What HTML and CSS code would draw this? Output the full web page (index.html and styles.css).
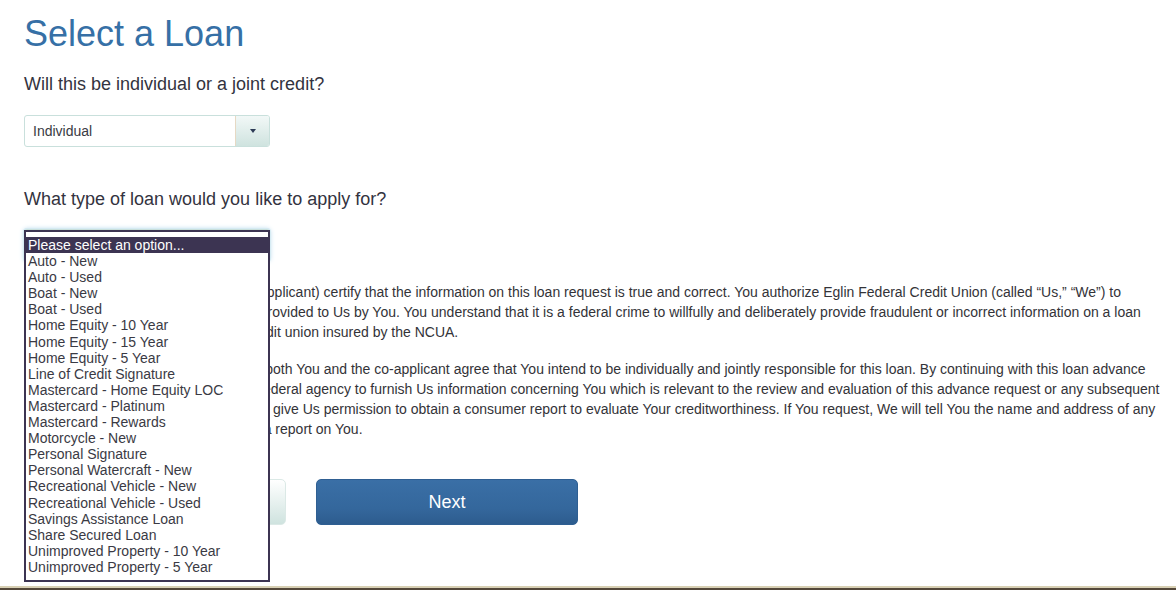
FILE: index.html
```html
<!DOCTYPE html>
<html lang="en">
<head>
<meta charset="utf-8">
<title>Select a Loan</title>
<link rel="stylesheet" href="styles.css">
</head>
<body>
<div class="page">
  <h1 class="title">Select a Loan</h1>
  <p class="question q1">Will this be individual or a joint credit?</p>
  <div class="select select-credit">
    <span class="select-value">Individual</span>
    <span class="select-btn"><span class="caret"></span></span>
  </div>
  <p class="question q2">What type of loan would you like to apply for?</p>
  <div class="select-wrap">
    <div class="select select-loan">
      <span class="select-value">Please select an option...</span>
    </div>
    <ul class="options">
      <li class="option active">Please select an option...</li>
      <li class="option">Auto - New</li>
      <li class="option">Auto - Used</li>
      <li class="option">Boat - New</li>
      <li class="option">Boat - Used</li>
      <li class="option">Home Equity - 10 Year</li>
      <li class="option">Home Equity - 15 Year</li>
      <li class="option">Home Equity - 5 Year</li>
      <li class="option">Line of Credit Signature</li>
      <li class="option">Mastercard - Home Equity LOC</li>
      <li class="option">Mastercard - Platinum</li>
      <li class="option">Mastercard - Rewards</li>
      <li class="option">Motorcycle - New</li>
      <li class="option">Personal Signature</li>
      <li class="option">Personal Watercraft - New</li>
      <li class="option">Recreational Vehicle - New</li>
      <li class="option">Recreational Vehicle - Used</li>
      <li class="option">Savings Assistance Loan</li>
      <li class="option">Share Secured Loan</li>
      <li class="option">Unimproved Property - 10 Year</li>
      <li class="option">Unimproved Property - 5 Year</li>
    </ul>
  </div>
  <div class="terms">
    <p>By signing this form, You (and any co-applicant) certify that the information on this loan request is true and correct. You authorize Eglin Federal Credit Union (called “Us,” “We”) to examine and verify all the information provided to Us by You. You understand that it is a federal crime to willfully and deliberately provide fraudulent or incorrect information on a loan application to a Federally chartered credit union insured by the NCUA.</p>
    <p>If this loan request is a joint obligation, both You and the co-applicant agree that You intend to be individually and jointly responsible for this loan. By continuing with this loan advance request, You authorize any entity or a federal agency to furnish Us information concerning You which is relevant to the review and evaluation of this advance request or any subsequent advance request or loan extension. You give Us permission to obtain a consumer report to evaluate Your creditworthiness. If You request, We will tell You the name and address of any consumer reporting agency that made a report on You.</p>
  </div>
  <div class="actions">
    <button class="btn btn-back" type="button">Back</button>
    <button class="btn btn-next" type="button">Next</button>
  </div>
</div>
<div class="footer"></div>
</body>
</html>
```
FILE: styles.css
```css
html, body {
  margin: 0;
  padding: 0;
  background: #ffffff;
}

body {
  font-family: "Liberation Sans", Arial, sans-serif;
  color: #333333;
  width: 1176px;
  height: 590px;
  overflow: hidden;
}

.page {
  padding: 0 4px 0 24px;
}

.title {
  margin: 14px 0 0;
  font-size: 36px;
  line-height: 40px;
  font-weight: normal;
  color: #3670a6;
}

.question {
  margin: 0;
  font-size: 18px;
  line-height: 20px;
  color: #333340;
}

.q1 {
  margin-top: 20px;
}

.q2 {
  margin-top: 42px;
}

.select {
  box-sizing: border-box;
  width: 246px;
  height: 32px;
  border: 1px solid #c9e0dc;
  border-radius: 3px;
  background: #ffffff;
  display: flex;
  align-items: center;
  font-size: 14px;
  color: #3a3a44;
}

.select-credit {
  margin-top: 21px;
}

.select-value {
  flex: 1;
  padding-left: 8px;
}

.select-btn {
  align-self: stretch;
  width: 33px;
  border-left: 1px solid #e6d9c4;
  border-radius: 0 2px 2px 0;
  background: linear-gradient(#f2f8f7, #cfe3df);
  display: flex;
  align-items: center;
  justify-content: center;
}

.caret {
  width: 0;
  height: 0;
  border-left: 3.5px solid transparent;
  border-right: 3.5px solid transparent;
  border-top: 4px solid #2c3a55;
}

.select-wrap {
  position: relative;
  margin-top: 20px;
  width: 246px;
}

.select-loan {
  box-shadow: 0 0 0 1px #d6ebf3, 0 0 5px #a9d2ea;
}

.options {
  position: absolute;
  top: 1px;
  left: 0;
  z-index: 5;
  box-sizing: border-box;
  width: 246px;
  margin: 0;
  padding: 5px 0 5px;
  list-style: none;
  background: #ffffff;
  border: 2px solid #3c3452;
  font-size: 14px;
  line-height: 16px;
  color: #3a3a44;
}

.option {
  height: 16.1px;
  padding-left: 2px;
  white-space: nowrap;
}

.option.active {
  background: #3c3452;
  color: #ffffff;
}

.terms {
  margin-top: 21px;
  font-size: 14px;
  line-height: 20px;
  color: #333338;
}

.terms p {
  margin: 0 0 17px;
}

.terms p:last-child {
  margin-bottom: 0;
}

.actions {
  margin-top: 40px;
  display: grid;
  grid-template-columns: 262px 262px;
  column-gap: 30px;
}

.btn {
  height: 46px;
  border-radius: 5px;
  font-family: "Liberation Sans", Arial, sans-serif;
  font-size: 18px;
  cursor: pointer;
}

.btn-back {
  border: 1px solid #dbe9e6;
  background: linear-gradient(#ffffff, #cfe3df);
  color: #336699;
}

.btn-next {
  border: 1px solid #2f5f92;
  background: linear-gradient(#3a6fa6 0%, #34679c 65%, #2d5c8e 100%);
  color: #ffffff;
}

.footer {
  margin-top: 61px;
  height: 2px;
  border-top: 2px solid #d8d0b4;
  background: #54483a;
}
```
